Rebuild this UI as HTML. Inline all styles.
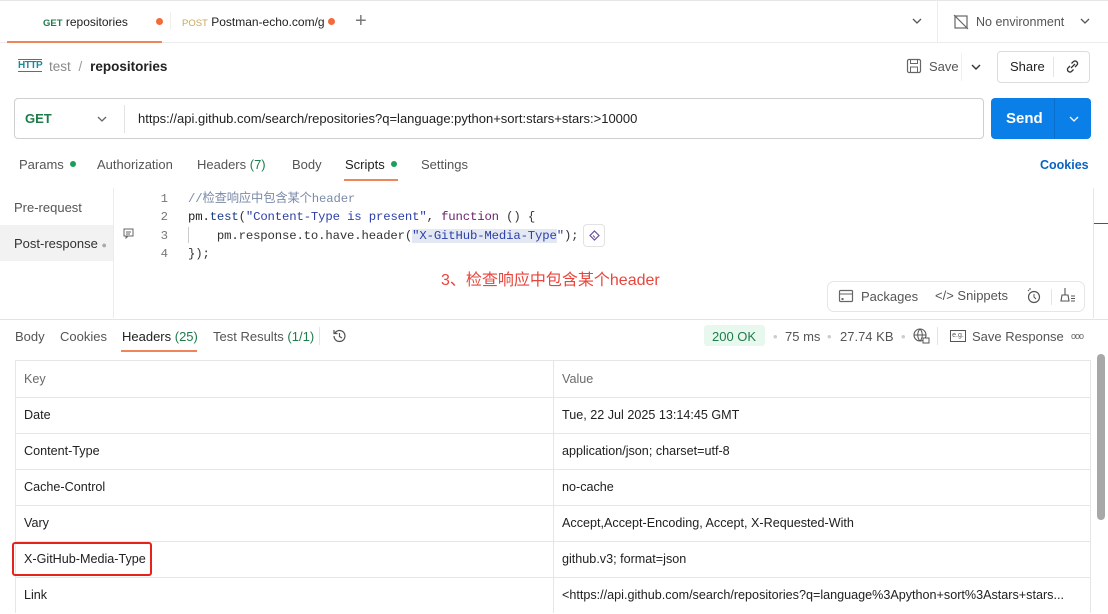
<!DOCTYPE html>
<html><head><meta charset="utf-8">
<style>
*{box-sizing:border-box;margin:0;padding:0}
body{width:1108px;height:613px;overflow:hidden;background:#fff;font-family:"Liberation Sans","Noto Sans CJK SC",sans-serif;font-size:13px;color:#212121;position:relative}
.a{position:absolute;white-space:nowrap}
.g{color:#6b6b6b}
.mono{font-family:"Liberation Mono","Noto Sans CJK SC",monospace;font-size:12.3px}
.row{position:absolute;left:15px;width:1076px;height:36px;border-bottom:1px solid #e6e6e6;font-size:12.6px}
.row span{position:absolute;top:11px}
.k{left:9px}.v{left:547px}
</style></head><body>
<div class="a" style="left:0;top:0;width:1108px;height:1px;background:#e6e6e6"></div>
<div class="a" style="left:0;top:42px;width:1108px;height:1px;background:#ececec"></div>
<div class="a" style="left:7px;top:41px;width:155px;height:2px;background:#f0845a"></div>
<div class="a" style="left:43px;top:15px;font-size:12px"><span style="color:#1e7c4b;font-size:9.5px;font-weight:bold">GET</span> repositories</div>
<div class="a" style="left:156px;top:18px;width:7px;height:7px;border-radius:50%;background:#f26b3a"></div>
<div class="a" style="left:170px;top:12px;width:1px;height:18px;background:#eee"></div>
<div class="a" style="left:182px;top:15px;font-size:12px;width:143px;overflow:hidden"><span style="color:#c9a85a;font-size:9.5px">POST</span> Postman-echo.com/g</div>
<div class="a" style="left:328px;top:18px;width:7px;height:7px;border-radius:50%;background:#f26b3a"></div>
<div class="a" style="left:355px;top:11px;font-size:20px;color:#777;line-height:20px">+</div>
<svg class="a" style="left:911px;top:17px" width="12" height="8"><path d="M2 2l4 4 4-4" fill="none" stroke="#555" stroke-width="1.3"/></svg>
<div class="a" style="left:937px;top:0;width:1px;height:42px;background:#ececec"></div>
<svg class="a" style="left:953px;top:14px" width="16" height="16"><rect x="2" y="2" width="12" height="12" fill="none" stroke="#666" stroke-width="1.2"/><path d="M1 1l14 14" stroke="#666" stroke-width="1.2"/></svg>
<div class="a g" style="left:976px;top:15px;font-size:12.5px;color:#555">No environment</div>
<svg class="a" style="left:1079px;top:17px" width="12" height="8"><path d="M2 2l4 4 4-4" fill="none" stroke="#555" stroke-width="1.3"/></svg>

<div class="a" style="left:18px;top:59px;font-size:10px;color:#1b8a9c;font-weight:bold;border-top:1.5px solid #1b8a9c;border-bottom:1.5px solid #1b8a9c;line-height:11px;letter-spacing:-0.5px">HTTP</div>
<div class="a" style="left:49px;top:59px;font-size:13.5px"><span style="color:#8a8a8a">test</span> <span style="color:#999;margin:0 4px">/</span> <b>repositories</b></div>
<svg class="a" style="left:906px;top:58px" width="16" height="16"><rect x="1.5" y="1.5" width="13" height="13" rx="1.5" fill="none" stroke="#666" stroke-width="1.2"/><rect x="4.5" y="1.5" width="7" height="4" fill="none" stroke="#666"/><rect x="4.5" y="9" width="7" height="5.5" fill="none" stroke="#666"/></svg>
<div class="a" style="left:929px;top:59px;font-size:13px;color:#555">Save</div>
<div class="a" style="left:961px;top:53px;width:1px;height:28px;background:#f0f0f0"></div>
<svg class="a" style="left:970px;top:63px" width="12" height="8"><path d="M2 2l4 4 4-4" fill="none" stroke="#333" stroke-width="1.4"/></svg>
<div class="a" style="left:997px;top:51px;width:93px;height:32px;border:1px solid #ddd;border-radius:4px"></div>
<div class="a" style="left:1010px;top:59px;font-size:13px">Share</div>
<div class="a" style="left:1053px;top:57px;width:1px;height:20px;background:#e4e4e4"></div>
<svg class="a" style="left:1064px;top:58px" width="17" height="17"><path d="M7 10l4-4M6 8l-2 2a2.5 2.5 0 003.5 3.5l2-2M11 9l2-2A2.5 2.5 0 009.5 3.5l-2 2" fill="none" stroke="#333" stroke-width="1.3"/></svg>

<div class="a" style="left:14px;top:98px;width:970px;height:41px;border:1px solid #cfcfcf;border-radius:4px"></div>
<div class="a" style="left:25px;top:111px;font-weight:bold;color:#1e7c4b;font-size:13px">GET</div>
<svg class="a" style="left:96px;top:115px" width="12" height="8"><path d="M2 2l4 4 4-4" fill="none" stroke="#666" stroke-width="1.3"/></svg>
<div class="a" style="left:124px;top:105px;width:1px;height:28px;background:#e2e2e2"></div>
<div class="a" style="left:138px;top:111px;font-size:13px">https://api.github.com/search/repositories?q=language:python+sort:stars+stars:&gt;10000</div>
<div class="a" style="left:991px;top:98px;width:100px;height:41px;background:#0a7fe8;border-radius:4px"></div>
<div class="a" style="left:1054px;top:98px;width:1px;height:41px;background:#0a6fcc"></div>
<div class="a" style="left:1006px;top:110px;color:#fff;font-weight:bold;font-size:15px">Send</div>
<svg class="a" style="left:1068px;top:115px" width="12" height="8"><path d="M2 2l4 4 4-4" fill="none" stroke="#fff" stroke-width="1.3"/></svg>

<div class="a" style="left:19px;top:157px;color:#555">Params <span style="display:inline-block;width:6px;height:6px;border-radius:50%;background:#18a058;vertical-align:2px;margin-left:3px"></span></div>
<div class="a" style="left:97px;top:157px;color:#555">Authorization</div>
<div class="a" style="left:197px;top:157px;color:#555">Headers <span style="color:#1e7c4b">(7)</span></div>
<div class="a" style="left:292px;top:157px;color:#555">Body</div>
<div class="a" style="left:345px;top:157px;color:#212121">Scripts <span style="display:inline-block;width:6px;height:6px;border-radius:50%;background:#18a058;vertical-align:2px;margin-left:3px"></span></div>
<div class="a" style="left:344px;top:179px;width:54px;height:2px;background:#f0845a"></div>
<div class="a" style="left:421px;top:157px;color:#555">Settings</div>
<div class="a" style="left:1040px;top:158px;color:#0a62c2;font-weight:bold;font-size:12.5px">Cookies</div>

<div class="a" style="left:113px;top:188px;width:1px;height:130px;background:#ececec"></div>
<div class="a" style="left:0;top:225px;width:113px;height:36px;background:#f2f2f2"></div>
<div class="a" style="left:14px;top:200px;color:#555">Pre-request</div>
<div class="a" style="left:14px;top:236px;color:#333">Post-response <span style="color:#aaa;font-size:9px">●</span></div>
<div class="a" style="left:1093px;top:188px;width:1px;height:130px;background:#e6e6e6"></div>
<div class="a" style="left:1094px;top:223px;width:14px;height:1px;background:#555"></div>
<div class="a mono" style="left:156px;top:190px;line-height:18.3px;color:#777;text-align:right;width:12px">1<br>2<br>3<br>4</div>
<svg class="a" style="left:123px;top:228px" width="11" height="11"><rect x="1" y="1" width="9" height="7" fill="none" stroke="#666"/><path d="M3 4h5M3 6h4M3 8v2l2-2" stroke="#666" fill="none"/></svg>
<div class="a" style="left:188px;top:227px;width:1px;height:16px;background:#ccc"></div>
<div class="a mono" style="left:188px;top:190px;line-height:18.3px;color:#333;letter-spacing:-0.15px">
<span style="color:#7a8aa8">//检查响应中包含某个header</span><br>
<span style="color:#222">pm.</span><span style="color:#1a3a8a">test</span>(<span style="color:#2c3fa8">"Content-Type is present"</span>, <span style="color:#6b1e6b">function</span> () {<br>
&nbsp;&nbsp;&nbsp;&nbsp;pm.response.to.have.header(<span style="background:#e3e8f2"><span style="color:#2c3fa8">"X-GitHub-Media-Type</span></span><span style="color:#2c3fa8">"</span>);<br>
});</div>
<div class="a" style="left:583px;top:224px;width:22px;height:23px;border:1px solid #e2e2e2;border-radius:4px;background:#fff"></div>
<svg class="a" style="left:588px;top:229px" width="13" height="13"><path d="M6.5 2l4.5 4.5-4.5 4.5L2 6.5z" fill="none" stroke="#6a4ea0" stroke-width="1.2"/><path d="M5 6.5l2 2" stroke="#6a4ea0"/></svg>
<div class="a" style="left:441px;top:266px;color:#e8453c;font-size:16px">3、检查响应中包含某个header</div>
<div class="a" style="left:827px;top:281px;width:258px;height:31px;border:1px solid #e6e6e6;border-radius:7px"></div>
<svg class="a" style="left:838px;top:288px" width="16" height="16"><rect x="1.5" y="2.5" width="13" height="11" rx="1" fill="none" stroke="#666" stroke-width="1.2"/><path d="M1.5 6h13" stroke="#666"/><rect x="3.5" y="10" width="2" height="2" fill="#666"/></svg>
<div class="a" style="left:861px;top:289px;color:#555">Packages</div>
<div class="a" style="left:935px;top:288px;color:#555">&lt;/&gt; Snippets</div>
<svg class="a" style="left:1025px;top:287px" width="18" height="18"><circle cx="9" cy="10" r="5.5" fill="none" stroke="#555" stroke-width="1.2"/><path d="M9 7v3l2 2M3 3l1 1M5 1v2" stroke="#555" fill="none"/></svg>
<div class="a" style="left:1051px;top:289px;width:1px;height:16px;background:#e4e4e4"></div>
<svg class="a" style="left:1059px;top:286px" width="18" height="18"><path d="M6 2v7M3 9h6l1 6H2z M12 10h4M12 12.5h4M12 15h4" fill="none" stroke="#555" stroke-width="1.1"/></svg>
<div class="a" style="left:0;top:319px;width:1108px;height:1px;background:#e4e4e4"></div>

<div class="a" style="left:15px;top:329px;color:#555">Body</div>
<div class="a" style="left:60px;top:329px;color:#555">Cookies</div>
<div class="a" style="left:122px;top:329px;color:#212121">Headers <span style="color:#1e7c4b">(25)</span></div>
<div class="a" style="left:121px;top:350px;width:76px;height:2px;background:#f0845a"></div>
<div class="a" style="left:213px;top:329px;color:#555">Test Results <span style="color:#1e7c4b">(1/1)</span></div>
<div class="a" style="left:319px;top:327px;width:1px;height:18px;background:#e4e4e4"></div>
<svg class="a" style="left:331px;top:328px" width="16" height="16"><path d="M3 8a5.5 5.5 0 105.5-5.5c-2 0-3.5 1-4.5 2.5M3 2v3.5h3.5M8.5 5v3.5l2.5 1.5" fill="none" stroke="#555" stroke-width="1.2"/></svg>
<div class="a" style="left:704px;top:325px;width:61px;height:21px;background:#e8f8ee;border-radius:3px"></div>
<div class="a" style="left:712px;top:329px;color:#1e7c4b;font-size:13px">200 OK</div>
<div class="a" style="left:773px;top:329px;color:#ccc">•</div>
<div class="a" style="left:785px;top:329px;color:#555">75 ms</div>
<div class="a" style="left:827px;top:329px;color:#ccc">•</div>
<div class="a" style="left:840px;top:329px;color:#555">27.74 KB</div>
<div class="a" style="left:901px;top:329px;color:#ccc">•</div>
<svg class="a" style="left:912px;top:327px" width="18" height="18"><circle cx="8" cy="8" r="6" fill="none" stroke="#555" stroke-width="1.1"/><path d="M2 8h12M8 2c-3 3-3 9 0 12M8 2c3 3 3 9 0 12" fill="none" stroke="#555"/><rect x="11" y="11" width="6" height="5" fill="#fff" stroke="#555"/></svg>
<div class="a" style="left:937px;top:327px;width:1px;height:18px;background:#e4e4e4"></div>
<div class="a" style="left:950px;top:330px;width:16px;height:12px;border:1.2px solid #555;font-size:7px;line-height:9px;text-align:center;color:#555">e.g.</div>
<div class="a" style="left:972px;top:329px;color:#555">Save Response</div>
<div class="a" style="left:1071px;top:331px;color:#666;font-size:9px;letter-spacing:-1px">ooo</div>

<div class="a" style="left:15px;top:360px;width:1076px;height:253px;border:1px solid #e6e6e6;border-bottom:none"></div>
<div class="a" style="left:553px;top:360px;width:1px;height:253px;background:#e6e6e6"></div>
<div class="row" style="top:360px;height:38px"><span class="k g" style="top:12px">Key</span><span class="v g" style="top:12px">Value</span></div>
<div class="row" style="top:398px"><span class="k" style="top:10px">Date</span><span class="v" style="top:10px">Tue, 22 Jul 2025 13:14:45 GMT</span></div>
<div class="row" style="top:434px"><span class="k" style="top:10px">Content-Type</span><span class="v" style="top:10px">application/json; charset=utf-8</span></div>
<div class="row" style="top:470px"><span class="k" style="top:10px">Cache-Control</span><span class="v" style="top:10px">no-cache</span></div>
<div class="row" style="top:506px"><span class="k" style="top:10px">Vary</span><span class="v" style="top:10px">Accept,Accept-Encoding, Accept, X-Requested-With</span></div>
<div class="row" style="top:542px"><span class="k" style="top:10px">X-GitHub-Media-Type</span><span class="v" style="top:10px">github.v3; format=json</span></div>
<div class="row" style="top:578px;border-bottom:none"><span class="k" style="top:10px">Link</span><span class="v" style="top:10px">&lt;https://api.github.com/search/repositories?q=language%3Apython+sort%3Astars+stars...</span></div>
<div class="a" style="left:12px;top:542px;width:140px;height:34px;border:2px solid #e5231b;border-radius:3px"></div>
<div class="a" style="left:1097px;top:354px;width:8px;height:166px;background:#a8a8a8;border-radius:4px"></div>
</body></html>
